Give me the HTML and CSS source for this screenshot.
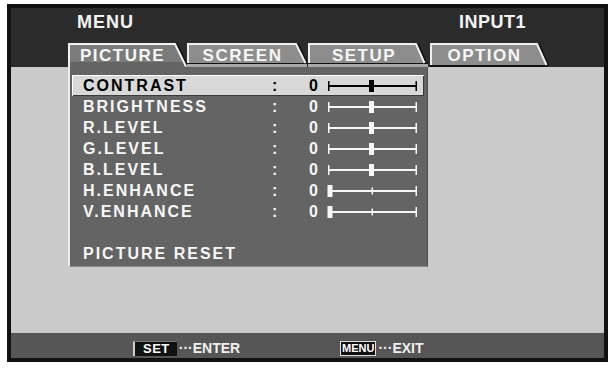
FILE: index.html
```html
<!DOCTYPE html>
<html>
<head>
<meta charset="utf-8">
<link rel="stylesheet" href="styles.css">
</head>
<body>
<div class="screen">
  <div class="header">
    <div class="title-row">
      <span class="title">MENU</span>
      <span class="input">INPUT1</span>
    </div>
    <div class="tabs">
      <div class="tab tab-picture">
        <svg width="121" height="24" viewBox="0 0 121 24">
          <polygon points="0,0 107,0 119,24 0,24" fill="#7b7b7b"/>
          <polygon points="0,19 116.6,19 119,24 0,24" fill="#646464"/>
          <polyline points="1,24 1,1 107,1 118,23.5" fill="none" stroke="#f2f2f2" stroke-width="2"/>
          <line x1="109" y1="0.5" x2="120.5" y2="24" stroke="#111" stroke-width="1.2"/>
        </svg>
        <span class="tab-label">PICTURE</span>
      </div>
      <div class="tab tab-screen">
        <svg width="121" height="24" viewBox="0 0 121 24">
          <rect x="0" y="21" width="120" height="3" fill="#a8a8a8"/>
          <rect x="0" y="20" width="120" height="1" fill="#111"/>
          <polygon points="0,0 109,0 119,20 0,20" fill="#8d8d8d"/>
          <polyline points="1,20 1,1 109,1 118.5,20" fill="none" stroke="#f0f0f0" stroke-width="2"/>
          <line x1="111" y1="0.5" x2="120.5" y2="20" stroke="#111" stroke-width="1.2"/>
        </svg>
        <span class="tab-label">SCREEN</span>
      </div>
      <div class="tab tab-setup">
        <svg width="122" height="24" viewBox="0 0 122 24">
          <rect x="0" y="21" width="120" height="3" fill="#a8a8a8"/>
          <rect x="0" y="20" width="120" height="1" fill="#111"/>
          <polygon points="0,0 108,0 117,20 0,20" fill="#8d8d8d"/>
          <polyline points="1,20 1,1 108,1 116.5,20" fill="none" stroke="#f0f0f0" stroke-width="2"/>
          <line x1="110" y1="0.5" x2="118.5" y2="20" stroke="#111" stroke-width="1.2"/>
        </svg>
        <span class="tab-label">SETUP</span>
      </div>
      <div class="tab tab-option">
        <svg width="119" height="24" viewBox="0 0 119 24">
          <rect x="0" y="22" width="118" height="2" fill="#111"/>
          <polygon points="0,0 107,0 117,22 0,22" fill="#8d8d8d"/>
          <polyline points="1,22 1,1 107,1 116.5,22" fill="none" stroke="#f0f0f0" stroke-width="2"/>
          <line x1="109" y1="0.5" x2="118.5" y2="22" stroke="#111" stroke-width="1.2"/>
        </svg>
        <span class="tab-label">OPTION</span>
      </div>
    </div>
  </div>

  <div class="body">
    <div class="panel">
      <div class="row row-selected">
        <span class="label">CONTRAST</span><span class="colon">:</span><span class="value">0</span>
        <svg class="slider" width="91" height="14" viewBox="0 0 91 14"><rect x="1" y="6" width="89" height="2"/><rect x="1" y="2" width="1.5" height="10"/><rect x="88.5" y="2" width="1.5" height="10"/><rect x="42" y="1" width="5" height="12"/></svg>
      </div>
      <div class="row">
        <span class="label">BRIGHTNESS</span><span class="colon">:</span><span class="value">0</span>
        <svg class="slider" width="91" height="14" viewBox="0 0 91 14"><rect x="1" y="6" width="89" height="2"/><rect x="1" y="2" width="1.5" height="10"/><rect x="88.5" y="2" width="1.5" height="10"/><rect x="42" y="1" width="5" height="12"/></svg>
      </div>
      <div class="row">
        <span class="label">R.LEVEL</span><span class="colon">:</span><span class="value">0</span>
        <svg class="slider" width="91" height="14" viewBox="0 0 91 14"><rect x="1" y="6" width="89" height="2"/><rect x="1" y="2" width="1.5" height="10"/><rect x="88.5" y="2" width="1.5" height="10"/><rect x="42" y="1" width="5" height="12"/></svg>
      </div>
      <div class="row">
        <span class="label">G.LEVEL</span><span class="colon">:</span><span class="value">0</span>
        <svg class="slider" width="91" height="14" viewBox="0 0 91 14"><rect x="1" y="6" width="89" height="2"/><rect x="1" y="2" width="1.5" height="10"/><rect x="88.5" y="2" width="1.5" height="10"/><rect x="42" y="1" width="5" height="12"/></svg>
      </div>
      <div class="row">
        <span class="label">B.LEVEL</span><span class="colon">:</span><span class="value">0</span>
        <svg class="slider" width="91" height="14" viewBox="0 0 91 14"><rect x="1" y="6" width="89" height="2"/><rect x="1" y="2" width="1.5" height="10"/><rect x="88.5" y="2" width="1.5" height="10"/><rect x="42" y="1" width="5" height="12"/></svg>
      </div>
      <div class="row">
        <span class="label">H.ENHANCE</span><span class="colon">:</span><span class="value">0</span>
        <svg class="slider" width="91" height="14" viewBox="0 0 91 14"><rect x="1" y="6" width="89" height="2"/><rect x="0.5" y="1" width="5" height="12"/><rect x="88.5" y="2" width="1.5" height="10"/><rect x="44.5" y="3.5" width="1.5" height="7"/></svg>
      </div>
      <div class="row">
        <span class="label">V.ENHANCE</span><span class="colon">:</span><span class="value">0</span>
        <svg class="slider" width="91" height="14" viewBox="0 0 91 14"><rect x="1" y="6" width="89" height="2"/><rect x="0.5" y="1" width="5" height="12"/><rect x="88.5" y="2" width="1.5" height="10"/><rect x="44.5" y="3.5" width="1.5" height="7"/></svg>
      </div>
      <div class="row row-gap"></div>
      <div class="row">
        <span class="label">PICTURE RESET</span>
      </div>
    </div>
  </div>

  <div class="footer">
    <div class="help help-enter"><span class="key key-set">SET</span><span class="hint">···ENTER</span></div>
    <div class="help"><span class="key key-menu">MENU</span><span class="hint">···EXIT</span></div>
  </div>
</div>
</body>
</html>
```

FILE: styles.css
```css
* { box-sizing: border-box; }

body {
  margin: 0;
  background: #ffffff;
  font-family: "Liberation Sans", Arial, sans-serif;
  font-weight: bold;
}

.screen {
  margin: 4px 0 0 7px;
  width: 601px;
  height: 358px;
  border: 4px solid #111;
  display: flex;
  flex-direction: column;
}

.header {
  height: 59px;
  background: #2c2c2c;
  flex: none;
}

.title-row {
  display: flex;
  height: 35px;
  padding: 4px 78px 0 66px;
  color: #f4f4f4;
  font-size: 18px;
  line-height: 20px;
  letter-spacing: 1px;
}

.input { margin-left: auto; letter-spacing: 0.5px; }

.tabs {
  display: flex;
  height: 24px;
  padding-left: 57px;
}

.tab {
  position: relative;
  height: 24px;
  flex: none;
}

.tab svg {
  position: absolute;
  left: 0;
  top: 0;
  overflow: visible;
}

.tab-picture { width: 119px; }
.tab-screen { width: 121px; }
.tab-setup { width: 122px; }
.tab-option { width: 119px; }

.tab-label {
  position: relative;
  display: block;
  padding: 4px 10px 0 0;
  text-align: center;
  font-size: 17px;
  line-height: 18px;
  letter-spacing: 1.5px;
  color: #f6f6f6;
}

.body {
  flex: 1;
  background: #cacaca;
}

.panel {
  margin-left: 57px;
  width: 360px;
  height: 200px;
  background: #646464;
  border-left: 2px solid #ececec;
  border-right: 1px solid #4e4e4e;
  border-bottom: 1px solid #8a8a8a;
  padding: 8px 0 0 2px;
}

.row {
  display: flex;
  align-items: center;
  width: 352px;
  height: 21px;
  color: #f7f7f7;
  fill: #f7f7f7;
  font-size: 16px;
  line-height: 21px;
  letter-spacing: 2px;
}

.row-selected {
  background: #d8d8d8;
  color: #000;
  fill: #000;
  box-shadow: inset 1px 1px 0 #ffffff, inset -1px -1px 0 #3a3a3a;
}

.label {
  width: 200px;
  padding-left: 11px;
  white-space: nowrap;
}

.colon { width: 37px; }
.value { width: 18px; letter-spacing: 0; }

.slider { display: block; flex: none; }

.footer {
  height: 25px;
  flex: none;
  background: #565656;
  display: flex;
  align-items: flex-end;
  padding: 0 0 2px 122px;
  color: #f0f0f0;
  font-family: "Liberation Sans Narrow", "Liberation Sans", Arial, sans-serif;
  font-size: 14px;
}

.help {
  display: flex;
  align-items: center;
  height: 15px;
}

.help-enter { width: 207px; }

.key {
  display: block;
  height: 15px;
  background: #111;
  color: #fff;
  font-family: "Liberation Sans", Arial, sans-serif;
}

.key-set {
  font-size: 13px;
  line-height: 14px;
  letter-spacing: 0.5px;
  padding: 0 7px 0 8px;
  border-left: 2px solid #d0d0d0;
  border-top: 1px solid #777;
}

.key-menu {
  font-size: 11px;
  padding: 0 1px;
  border: 1px solid #e0e0e0;
  line-height: 13px;
}

.hint {
  margin-left: 2px;
  line-height: 15px;
}
```
